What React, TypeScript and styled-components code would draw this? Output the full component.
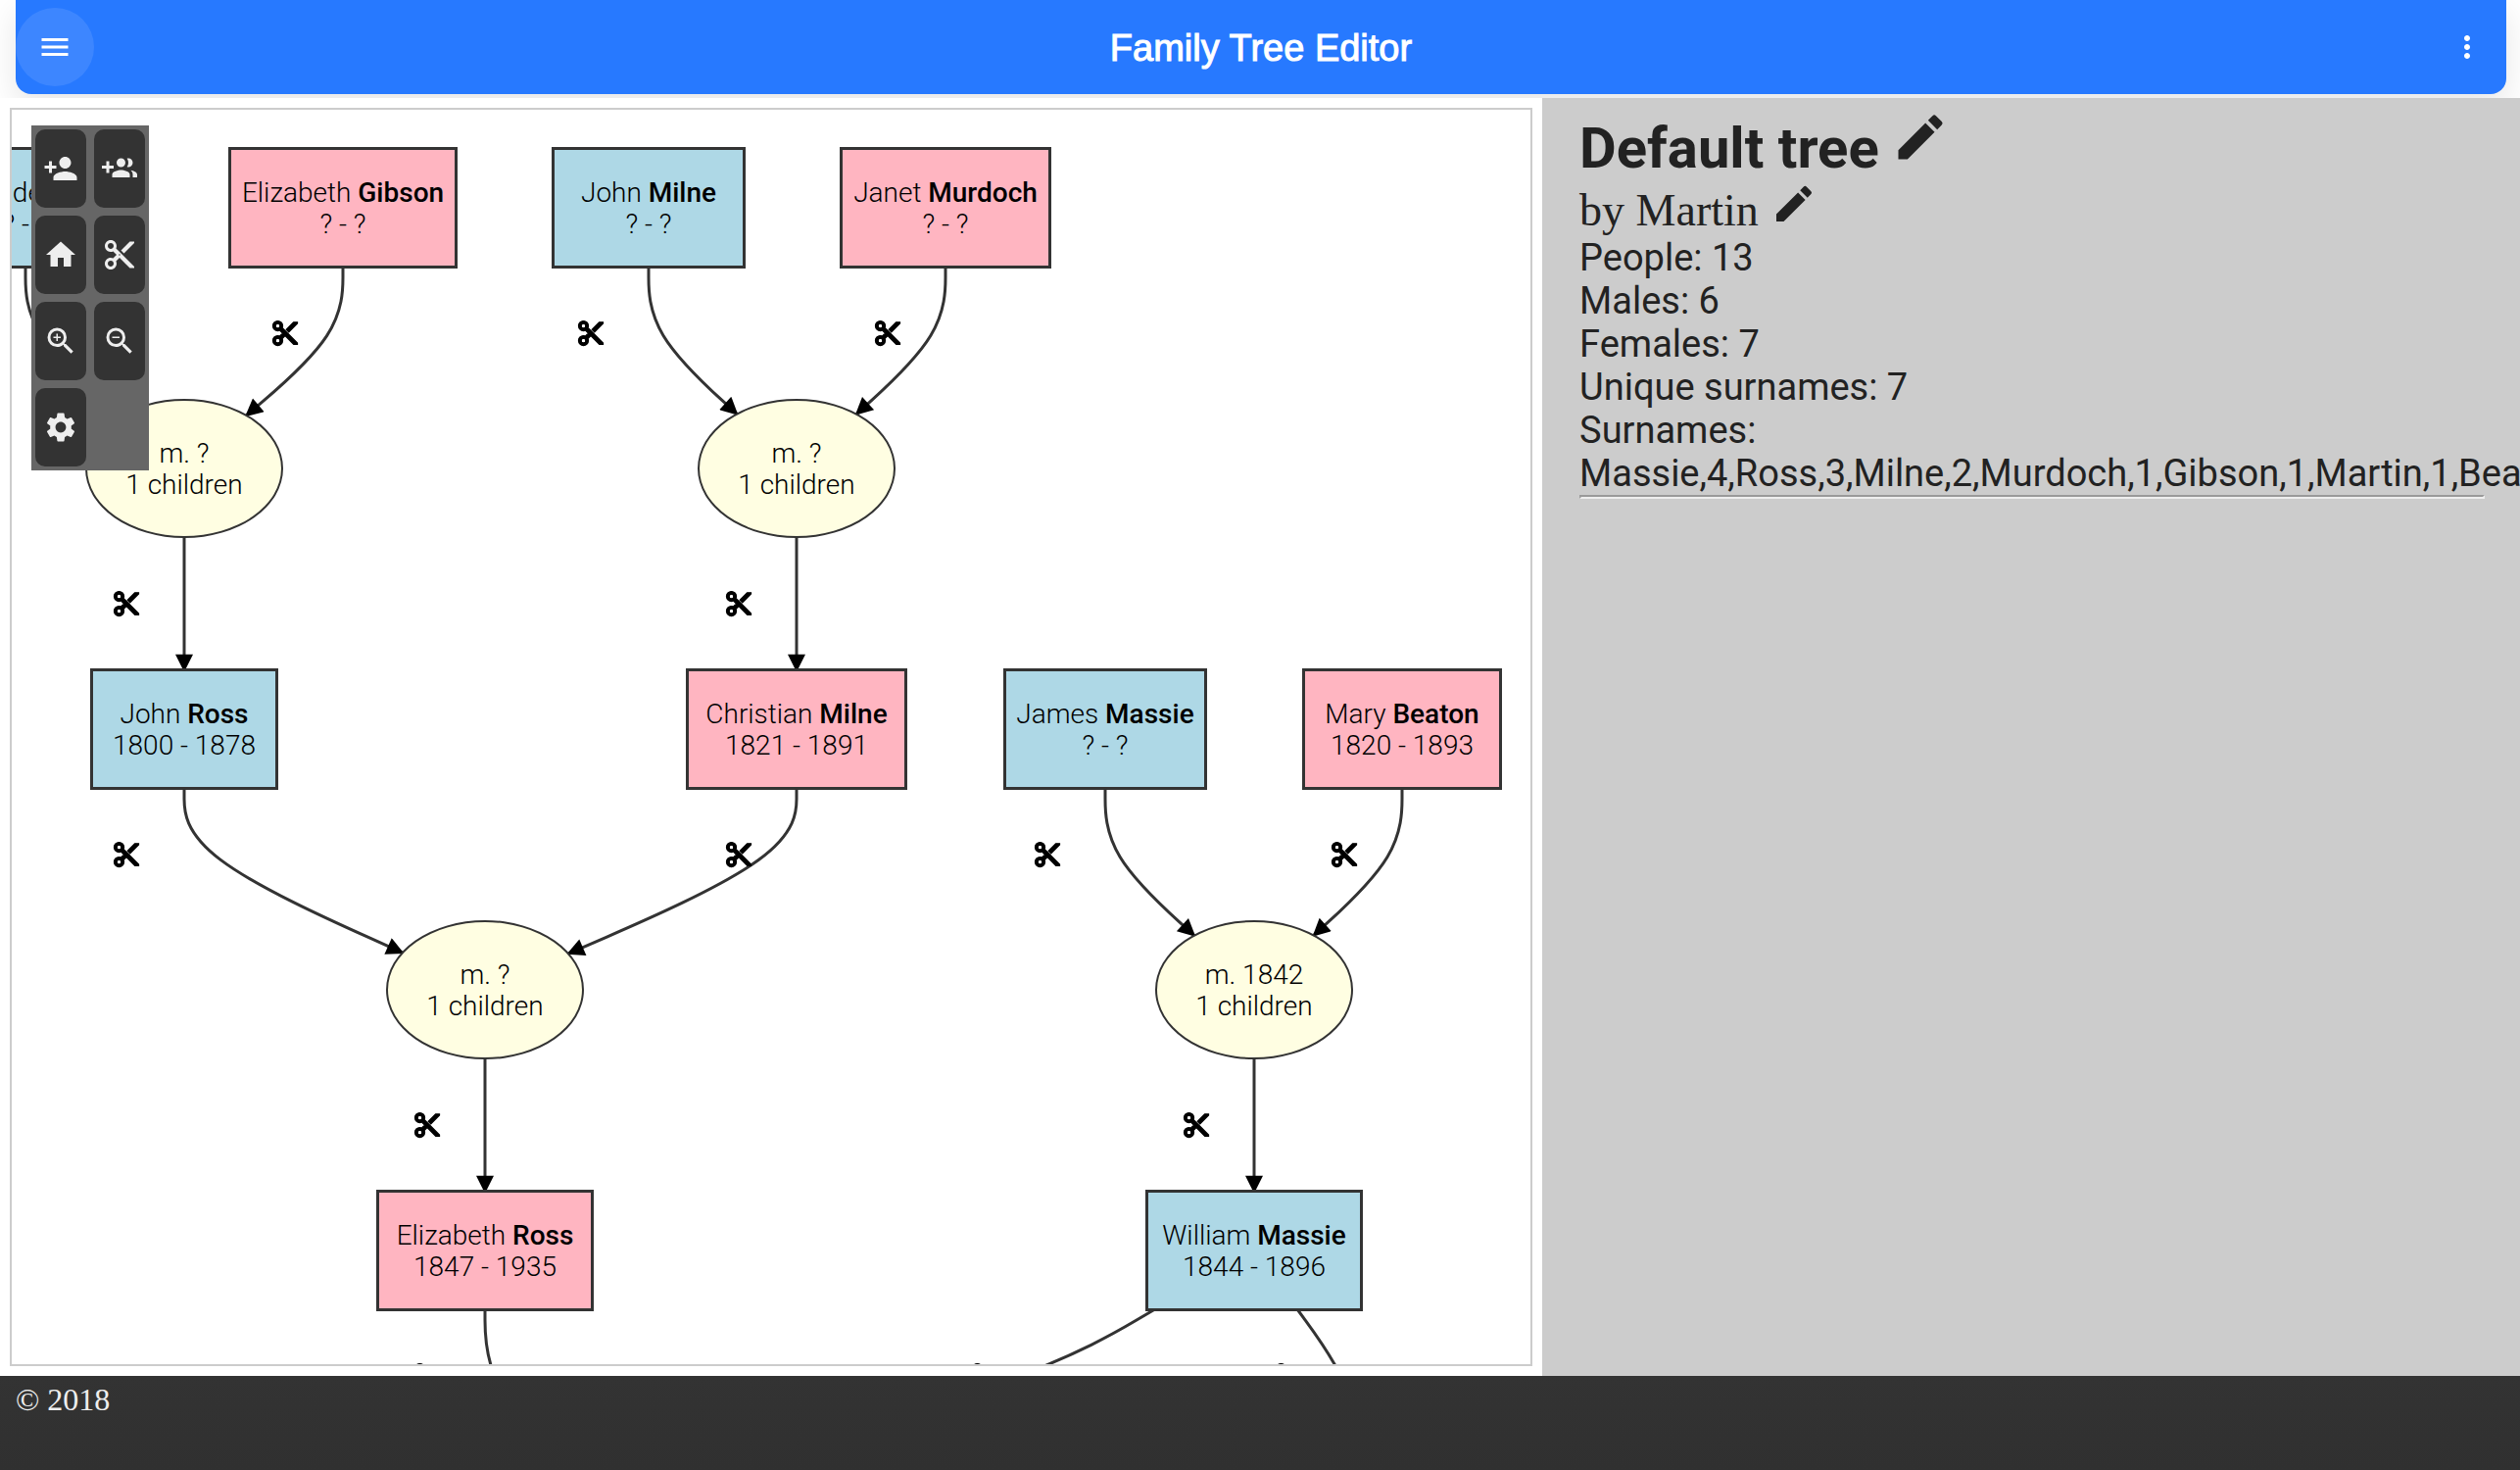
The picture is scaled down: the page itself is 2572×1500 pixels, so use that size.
import React from "react";
import styled, { createGlobalStyle } from "styled-components";
import {
  MdContentCut,
  MdEdit,
  MdHome,
  MdMenu,
  MdMoreVert,
  MdPersonAdd,
  MdSettings,
  MdZoomIn,
  MdZoomOut,
} from "react-icons/md";

const INK = "#333333";

type Point = { x: number; y: number };
type Sex = "male" | "female";

interface Person extends Point {
  id: string;
  first: string;
  last: string;
  dates: string;
  sex: Sex;
  width: number;
}

interface Union extends Point {
  id: string;
  married?: string;
}

interface Edge {
  id: string;
  points: Point[];
}

const PERSON_HEIGHT = 120;
const UNION_RX = 100;
const UNION_RY = 70;
const LABEL_OFFSET = 59;

const people: Person[] = [
  { id: "alexander", first: "Alexander", last: "Ross", dates: "? - ?", sex: "male", x: 14, y: 100, width: 216 },
  { id: "gibson", first: "Elizabeth", last: "Gibson", dates: "? - ?", sex: "female", x: 338, y: 100, width: 234 },
  { id: "milne", first: "John", last: "Milne", dates: "? - ?", sex: "male", x: 650, y: 100, width: 198 },
  { id: "murdoch", first: "Janet", last: "Murdoch", dates: "? - ?", sex: "female", x: 953, y: 100, width: 216 },
  { id: "ross", first: "John", last: "Ross", dates: "1800 - 1878", sex: "male", x: 176, y: 632, width: 192 },
  { id: "christian", first: "Christian", last: "Milne", dates: "1821 - 1891", sex: "female", x: 801, y: 632, width: 226 },
  { id: "james", first: "James", last: "Massie", dates: "? - ?", sex: "male", x: 1116, y: 632, width: 208 },
  { id: "mary", first: "Mary", last: "Beaton", dates: "1820 - 1893", sex: "female", x: 1419, y: 632, width: 204 },
  { id: "elizabeth", first: "Elizabeth", last: "Ross", dates: "1847 - 1935", sex: "female", x: 483, y: 1164, width: 222 },
  { id: "william", first: "William", last: "Massie", dates: "1844 - 1896", sex: "male", x: 1268, y: 1164, width: 222 },
];

const unions: Union[] = [
  { id: "u1", married: "?", x: 176, y: 366 },
  { id: "u2", married: "?", x: 801, y: 366 },
  { id: "u3", married: "?", x: 483, y: 898 },
  { id: "u4", married: "1842", x: 1268, y: 898 },
];

/* Unions of the next generation: only their incoming edges are shown. */
const nextUnions: Union[] = [
  { id: "u5", x: 596, y: 1430 },
  { id: "u6", x: 1396, y: 1430 },
];

const find = <T extends { id: string }>(list: T[], id: string): T =>
  list.find((item) => item.id === id) as T;

/* Where the line from a union's centre to a point leaves its ellipse. */
function onEllipse(union: Point, to: Point): Point {
  const dx = to.x - union.x;
  const dy = to.y - union.y;
  const det = Math.sqrt((UNION_RX * dy) ** 2 + (UNION_RY * dx) ** 2);
  const k = (UNION_RX * UNION_RY) / det;
  return { x: union.x + dx * k, y: union.y + dy * k };
}

/* A person-to-union edge; the label sits below the person unless given. */
function intoUnion(personId: string, unionId: string, labelX?: number): Edge {
  const person = find(people, personId);
  const union = find([...unions, ...nextUnions], unionId);
  const half = PERSON_HEIGHT / 2;
  const label = { x: labelX ?? person.x, y: person.y + 128 };
  const start = {
    x: person.x + ((label.x - person.x) * half) / 128,
    y: person.y + half,
  };
  return { id: `${personId}-${unionId}`, points: [start, label, onEllipse(union, label)] };
}

function intoPerson(unionId: string, personId: string): Edge {
  const union = find(unions, unionId);
  const person = find(people, personId);
  const top = person.y - PERSON_HEIGHT / 2;
  const label = { x: person.x, y: union.y + 138 };
  return {
    id: `${unionId}-${personId}`,
    points: [{ x: union.x, y: union.y + UNION_RY }, label, { x: person.x, y: top }],
  };
}

const edges: Edge[] = [
  intoUnion("alexander", "u1"),
  intoUnion("gibson", "u1"),
  intoUnion("milne", "u2"),
  intoUnion("murdoch", "u2"),
  intoPerson("u1", "ross"),
  intoPerson("u2", "christian"),
  intoUnion("ross", "u3"),
  intoUnion("christian", "u3"),
  intoUnion("james", "u4"),
  intoUnion("mary", "u4"),
  intoPerson("u3", "elizabeth"),
  intoPerson("u4", "william"),
  intoUnion("elizabeth", "u5"),
  intoUnion("william", "u5", 1052),
  intoUnion("william", "u6", 1362),
];

/* Three-point basis spline, written as two cubic segments. */
function spline([a, b, c]: Point[]): string {
  const mix = (i: number, j: number, k: number, sum: number) =>
    `${(i * a.x + j * b.x + k * c.x) / sum},${(i * a.y + j * b.y + k * c.y) / sum}`;
  return [
    `M${mix(1, 0, 0, 1)}L${mix(5, 1, 0, 6)}`,
    `C${mix(2, 1, 0, 3)} ${mix(1, 2, 0, 3)} ${mix(1, 4, 1, 6)}`,
    `C${mix(0, 2, 1, 3)} ${mix(0, 1, 2, 3)} ${mix(0, 1, 5, 6)}`,
    `L${mix(0, 0, 1, 1)}`,
  ].join("");
}

const GlobalStyle = createGlobalStyle`
  *, *::before, *::after { box-sizing: border-box; }
  body { margin: 0; background: #ffffff; }
  button { margin: 0; padding: 0; border: 0; background: none; color: inherit; font: inherit; cursor: pointer; }
  svg { display: block; }
`;

const Page = styled.div`
  display: flex;
  flex-direction: column;
  height: 100vh;
  overflow: hidden;
  font-family: Roboto, "Liberation Sans", sans-serif;
`;

const Header = styled.header`
  display: flex;
  align-items: center;
  flex: none;
  height: 96px;
  margin: 0 14px 4px 16px;
  border-radius: 0 0 16px 16px;
  background: #2779ff;
  box-shadow: 0 12px 32px rgba(0, 0, 0, 0.1);
  color: #ffffff;
`;

const HeaderButton = styled.button<{ $lit?: boolean }>`
  display: grid;
  place-items: center;
  width: 80px;
  height: 80px;
  border-radius: 50%;
  background: ${({ $lit }) => ($lit ? "rgba(255, 255, 255, 0.1)" : "transparent")};
  font-size: 36px;
`;

const Title = styled.h1`
  flex: 1;
  margin: 0;
  padding-top: 2px;
  font: 400 38px/48px "Liberation Sans", Arial, sans-serif;
  -webkit-text-stroke: 1px currentColor;
  text-align: center;
`;

const Main = styled.main`
  position: relative;
  display: flex;
  flex: 1;
  min-height: 0;
  background: #ffffff;
`;

const GraphPanel = styled.section`
  display: flex;
  flex: none;
  width: 61.2%;
  padding: 10px;
`;

const Canvas = styled.div`
  position: relative;
  flex: 1;
  overflow: hidden;
  border: 2px solid #cccccc;
`;

const Wires = styled.svg`
  position: absolute;
  inset: 0;
  width: 100%;
  height: 100%;
`;

const Wire = styled.path`
  fill: none;
  stroke: ${INK};
  stroke-width: 3px;
`;

const NodeBox = styled.div<{ $x: number; $y: number }>`
  position: absolute;
  left: ${({ $x }) => $x}px;
  top: ${({ $y }) => $y}px;
  transform: translate(-50%, -50%);
  color: #000000;
  font-size: 28px;
  font-weight: 300;
  line-height: 32px;
  text-align: center;
  white-space: nowrap;
`;

const PersonBox = styled(NodeBox)<{ $width: number; $sex: Sex }>`
  width: ${({ $width }) => $width}px;
  height: 124px;
  padding-top: 28px;
  border: 3px solid ${INK};
  background: ${({ $sex }) => ($sex === "male" ? "#aed8e6" : "#ffb5c1")};
`;

const UnionBox = styled(NodeBox)`
  width: 202px;
  height: 142px;
  padding-top: 38px;
  border: 2px solid ${INK};
  border-radius: 50%;
  background: #fffee2;
`;

const Surname = styled.b`
  font-weight: 500;
`;

const CutButton = styled.button<{ $x: number; $y: number }>`
  position: absolute;
  left: ${({ $x }) => $x}px;
  top: ${({ $y }) => $y}px;
  transform: translate(-50%, -50%);
  color: #000000;
  font-size: 30px;

  svg {
    stroke-width: 1px;
  }

  path[fill="none"] {
    stroke: none;
  }
`;

const Toolbar = styled.div`
  position: absolute;
  left: 20px;
  top: 16px;
  display: grid;
  grid-template-columns: 52px 52px;
  gap: 8px;
  padding: 4px;
  background: #666666;
`;

const Tool = styled.button`
  display: grid;
  place-items: center;
  height: 80px;
  border-radius: 10px;
  background: #333333;
  color: #eeeeee;
  font-size: 36px;
`;

const Sidebar = styled.aside`
  flex: 1;
  min-width: 0;
  overflow: hidden;
  padding: 14px 36px 0 38px;
  background: #cccccc;
  color: #222222;
`;

const TreeName = styled.h2`
  display: flex;
  gap: 12px;
  margin: 0;
  font-size: 58px;
  font-weight: 700;
  line-height: 74px;
`;

const Author = styled.div`
  display: flex;
  gap: 12px;
  font: 400 46px/53px "Liberation Serif", "Times New Roman", serif;
`;

const EditButton = styled.button<{ $size: number }>`
  align-self: flex-start;
  margin-top: -4px;
  font-size: ${({ $size }) => $size}px;
`;

const Stats = styled.div`
  font-size: 38px;
  line-height: 44px;
`;

const Rule = styled.hr`
  margin: 0;
  border: 2px solid;
  border-color: #9a9a9a #eeeeee #eeeeee #9a9a9a;
`;

const Footer = styled.footer`
  flex: none;
  height: 96px;
  padding: 6px 16px;
  background: linear-gradient(#333333, #303030);
  color: #eeeeee;
  font: 400 32px/36px "Liberation Serif", "Times New Roman", serif;
`;

function GroupAddIcon() {
  return (
    <svg viewBox="0 0 24 24" width="1em" height="1em" fill="currentColor" aria-hidden="true">
      <path d="M8 10H5V7H3v3H0v2h3v3h2v-3h3v-2zm10 1c1.66 0 2.99-1.34 2.99-3S19.66 5 18 5c-.32 0-.63.05-.91.14.57.81.9 1.79.9 2.86s-.34 2.04-.9 2.86c.28.09.59.14.91.14zm-5 0c1.66 0 2.99-1.34 2.99-3S14.66 5 13 5c-1.66 0-3 1.34-3 3s1.34 3 3 3zm6.62 2.16c.83.73 1.38 1.66 1.38 2.84v2h3v-2c0-1.54-2.37-2.49-4.38-2.84zM13 13c-2 0-6 1-6 3v2h12v-2c0-2-4-3-6-3z" />
    </svg>
  );
}

const tools = [
  { label: "Add person", Icon: MdPersonAdd },
  { label: "Add union", Icon: GroupAddIcon },
  { label: "Home", Icon: MdHome },
  { label: "Cut", Icon: MdContentCut },
  { label: "Zoom in", Icon: MdZoomIn },
  { label: "Zoom out", Icon: MdZoomOut },
  { label: "Settings", Icon: MdSettings },
];

const surnames: [string, number][] = [
  ["Massie", 4],
  ["Ross", 3],
  ["Milne", 2],
  ["Murdoch", 1],
  ["Gibson", 1],
  ["Martin", 1],
  ["Beaton", 1],
];

function FamilyGraph() {
  return (
    <Canvas>
      <Wires aria-hidden="true">
        <defs>
          <marker id="arrow" viewBox="0 0 10 10" refX="9" refY="5" markerWidth="8" markerHeight="6" orient="auto">
            <path d="M0 0L10 5L0 10z" />
          </marker>
        </defs>
        {edges.map((edge) => (
          <Wire key={edge.id} d={spline(edge.points)} markerEnd="url(#arrow)" />
        ))}
      </Wires>
      {unions.map((union) => (
        <UnionBox key={union.id} $x={union.x} $y={union.y}>
          m. {union.married}
          <br />1 children
        </UnionBox>
      ))}
      {people.map((person) => (
        <PersonBox key={person.id} $x={person.x} $y={person.y} $width={person.width} $sex={person.sex}>
          {person.first} <Surname>{person.last}</Surname>
          <br />
          {person.dates}
        </PersonBox>
      ))}
      {edges.map(({ id, points }) => (
        <CutButton key={id} $x={points[1].x - LABEL_OFFSET} $y={points[1].y} aria-label="Cut link">
          <MdContentCut />
        </CutButton>
      ))}
      <Toolbar role="toolbar" aria-label="Tree tools">
        {tools.map(({ label, Icon }) => (
          <Tool key={label} aria-label={label}>
            <Icon />
          </Tool>
        ))}
      </Toolbar>
    </Canvas>
  );
}

export default function App() {
  return (
    <Page>
      <GlobalStyle />
      <Header>
        <HeaderButton $lit aria-label="Menu">
          <MdMenu />
        </HeaderButton>
        <Title>Family Tree Editor</Title>
        <HeaderButton aria-label="More">
          <MdMoreVert />
        </HeaderButton>
      </Header>
      <Main>
        <GraphPanel>
          <FamilyGraph />
        </GraphPanel>
        <Sidebar>
          <TreeName>
            Default tree
            <EditButton $size={60} aria-label="Edit tree name">
              <MdEdit />
            </EditButton>
          </TreeName>
          <Author>
            by Martin
            <EditButton $size={48} aria-label="Edit author">
              <MdEdit />
            </EditButton>
          </Author>
          <Stats>
            <div>People: 13</div>
            <div>Males: 6</div>
            <div>Females: 7</div>
            <div>Unique surnames: 7</div>
            <div>Surnames: {surnames.flat().join(",")}</div>
          </Stats>
          <Rule />
        </Sidebar>
      </Main>
      <Footer>© 2018</Footer>
    </Page>
  );
}
